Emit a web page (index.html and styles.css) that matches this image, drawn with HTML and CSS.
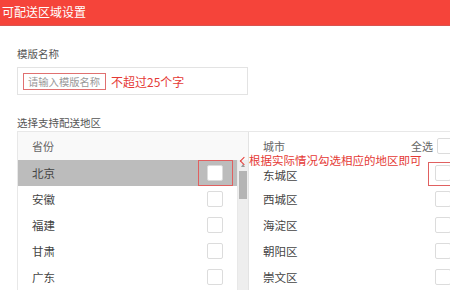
FILE: index.html
```html
<!DOCTYPE html>
<html lang="zh">
<head>
<meta charset="utf-8">
<link rel="stylesheet" href="styles.css">
</head>
<body>
<div class="header">可配送区域设置</div>
<div class="main">
  <div class="label name-label">模版名称</div>
  <div class="input-row">
    <div class="input-wrap">
      <span class="placeholder">请输入模版名称</span>
      <span class="note">不超过25个字</span>
    </div>
  </div>
  <div class="label area-label">选择支持配送地区</div>
  <div class="region">
    <div class="panel left">
      <div class="thead"><span>省份</span></div>
      <div class="body-wrap">
        <div class="rows">
          <div class="row selected"><span>北京</span><i class="cb"></i><b class="mark mark-left"></b></div>
          <div class="row"><span>安徽</span><i class="cb"></i></div>
          <div class="row"><span>福建</span><i class="cb"></i></div>
          <div class="row"><span>甘肃</span><i class="cb"></i></div>
          <div class="row"><span>广东</span><i class="cb"></i></div>
        </div>
        <div class="scrollbar">
          <div class="arrow"></div>
          <div class="thumb"></div>
        </div>
      </div>
    </div>
    <div class="panel right">
      <div class="thead"><span>城市</span><span class="all">全选<i class="cb"></i></span></div>
      <div class="rows">
        <div class="row first"><span>东城区</span><i class="cb"></i><b class="mark mark-right"></b></div>
        <div class="row"><span>西城区</span><i class="cb"></i></div>
        <div class="row"><span>海淀区</span><i class="cb"></i></div>
        <div class="row"><span>朝阳区</span><i class="cb"></i></div>
        <div class="row"><span>崇文区</span><i class="cb"></i></div>
      </div>
      <div class="tip">根据实际情况勾选相应的地区即可</div>
    </div>
  </div>
</div>
</body>
</html>
```
FILE: styles.css
```css
* { box-sizing: border-box; margin: 0; padding: 0; }
html, body { width: 450px; height: 300px; overflow: hidden; background: #fff; }
body {
  font-family: "Noto Sans CJK SC", "Noto Sans", sans-serif;
  color: #555;
}
.header {
  height: 26px;
  background: #f5443a;
  border-bottom: 1px solid #d9534f;
  color: #fff;
  font-size: 12px;
  line-height: 24px;
  padding-left: 2px;
}
.main { padding: 0 0 0 17px; }
.label { font-size: 10.5px; line-height: 14px; color: #555; }
.name-label { margin-top: 21px; }
.input-row { margin-top: 6px; }
.input-wrap {
  width: 231px;
  height: 28px;
  border: 1px solid #e3e3e3;
  display: flex;
  align-items: center;
  padding-left: 5px;
}
.placeholder {
  font-size: 10.3px;
  color: #999;
  border: 1px solid #e07070;
  height: 17px;
  line-height: 15px;
  padding: 0 4px;
  width: 83px;
  white-space: nowrap;
}
.note { font-size: 12px; color: #e53935; margin-left: 5px; }
.area-label { margin-top: 21px; }
.region {
  margin-top: 1px;
  display: flex;
  width: 440px;
  border-top: 1px solid #e8e8e8;
}
.panel { position: relative; }
.left { width: 231px; border-left: 1px solid #e8e8e8; flex: none; }
.right { width: 205px; border-left: 1px solid #e3e3e3; flex: none; }
.thead {
  height: 28px;
  background: #f9f9f9;
  font-size: 11px;
  line-height: 13px;
  padding-left: 14px;
  color: #666;
  display: flex;
  align-items: center;
  justify-content: space-between;
}
.right .thead { background: #fff; padding-left: 14px; }
.all { display: flex; align-items: center; gap: 4px; }
.body-wrap { display: flex; }
.rows { flex: 1; }
.row {
  position: relative;
  height: 26px;
  display: flex;
  align-items: center;
  justify-content: space-between;
  padding-left: 14px;
  font-size: 11.5px;
  line-height: 13px;
  color: #444;
}
.left .row { padding-right: 14px; }
.right .row { padding-right: 2px; }
.right .row.first span { margin-top: 5px; }
.row.selected { background: #bcbcbc; }
.cb {
  display: block;
  width: 16px;
  height: 16px;
  border: 1px solid #dcdcdc;
  border-radius: 2px;
  background: #fff;
}
.scrollbar {
  width: 11px;
  background: #eeeeee;
  position: relative;
  border-left: 1px solid #e8e8e8;
}
.arrow {
  margin: 4px auto 0;
  width: 0; height: 0;
  border-left: 2.5px solid transparent;
  border-right: 2.5px solid transparent;
  border-bottom: 3px solid #999;
}
.thumb {
  margin: 4px 1px 0;
  height: 28px;
  background: #b4b4b4;
}
.mark {
  position: absolute;
  border: 1px solid #e06060;
}
.mark-left { left: 180px; top: 0; width: 35px; height: 26px; }
.mark-right { left: 179px; top: 2px; width: 30px; height: 24px; }
.tip {
  position: absolute;
  left: 0;
  top: 22px;
  font-size: 11.5px;
  line-height: 12px;
  color: #e53935;
  white-space: nowrap;
}
.tip::before {
  content: "";
  position: absolute;
  left: -8px;
  top: 4px;
  width: 5px;
  height: 5px;
  border-left: 1px solid #e53935;
  border-bottom: 1px solid #e53935;
  transform: rotate(45deg);
}
```
